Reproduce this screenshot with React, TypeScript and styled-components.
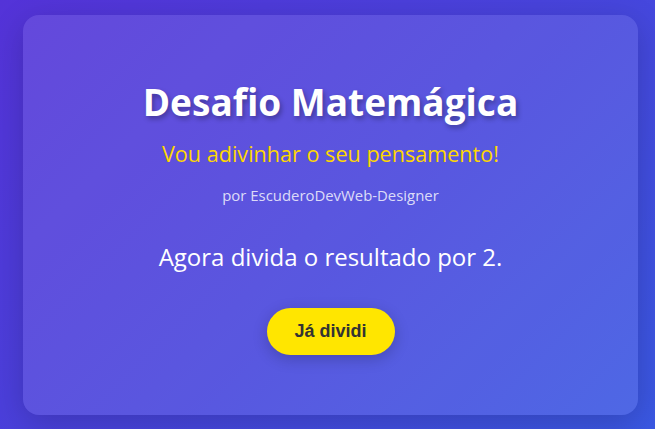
import React from "react";
import styled, { createGlobalStyle } from "styled-components";

const GlobalStyle = createGlobalStyle`
  html, body {
    margin: 0;
    padding: 0;
    height: 100%;
  }
  body {
    background: linear-gradient(135deg, #5433d8 0%, #4843dc 50%, #3a58e2 100%);
    font-family: "Open Sans", "Noto Sans", sans-serif;
    overflow: hidden;
  }
`;

const Page = styled.div`
  width: 655px;
  height: 429px;
  box-sizing: border-box;
  padding: 15px 17px 14px 23px;
  display: flex;
`;

const Card = styled.main`
  flex: 1;
  box-sizing: border-box;
  height: 400px;
  border-radius: 16px;
  background: rgba(255, 255, 255, 0.1);
  box-shadow: 0 8px 32px rgba(0, 0, 0, 0.18);
  display: flex;
  flex-direction: column;
  align-items: center;
  padding: 65px 20px 0 20px;
  text-align: center;
`;

const Title = styled.h1`
  margin: 0;
  font-size: 37px;
  line-height: 43px;
  font-weight: 700;
  color: #ffffff;
  text-shadow: 2px 3px 5px rgba(0, 0, 0, 0.3);
`;

const Subtitle = styled.p`
  margin: 19px 0 0 0;
  font-size: 21.6px;
  line-height: 24px;
  color: #ffd700;
`;

const Author = styled.p`
  margin: 21px 0 0 0;
  font-size: 14.9px;
  line-height: 17px;
  color: rgba(255, 255, 255, 0.8);
`;

const Instruction = styled.p`
  margin: 40px 0 0 0;
  font-size: 24px;
  line-height: 26px;
  color: #ffffff;
`;

const Button = styled.button`
  margin-top: 38px;
  width: 128px;
  height: 47px;
  border: none;
  border-radius: 24px;
  background: #ffe600;
  color: #333333;
  font-family: "Liberation Sans", Arial, sans-serif;
  font-weight: 700;
  font-size: 18px;
  box-shadow: 0 4px 15px rgba(0, 0, 0, 0.2);
  cursor: pointer;
`;

export default function App() {
  return (
    <>
      <GlobalStyle />
      <Page>
        <Card>
          <Title>Desafio Matemágica</Title>
          <Subtitle>Vou adivinhar o seu pensamento!</Subtitle>
          <Author>por EscuderoDevWeb-Designer</Author>
          <Instruction>Agora divida o resultado por 2.</Instruction>
          <Button>Já dividi</Button>
        </Card>
      </Page>
    </>
  );
}
